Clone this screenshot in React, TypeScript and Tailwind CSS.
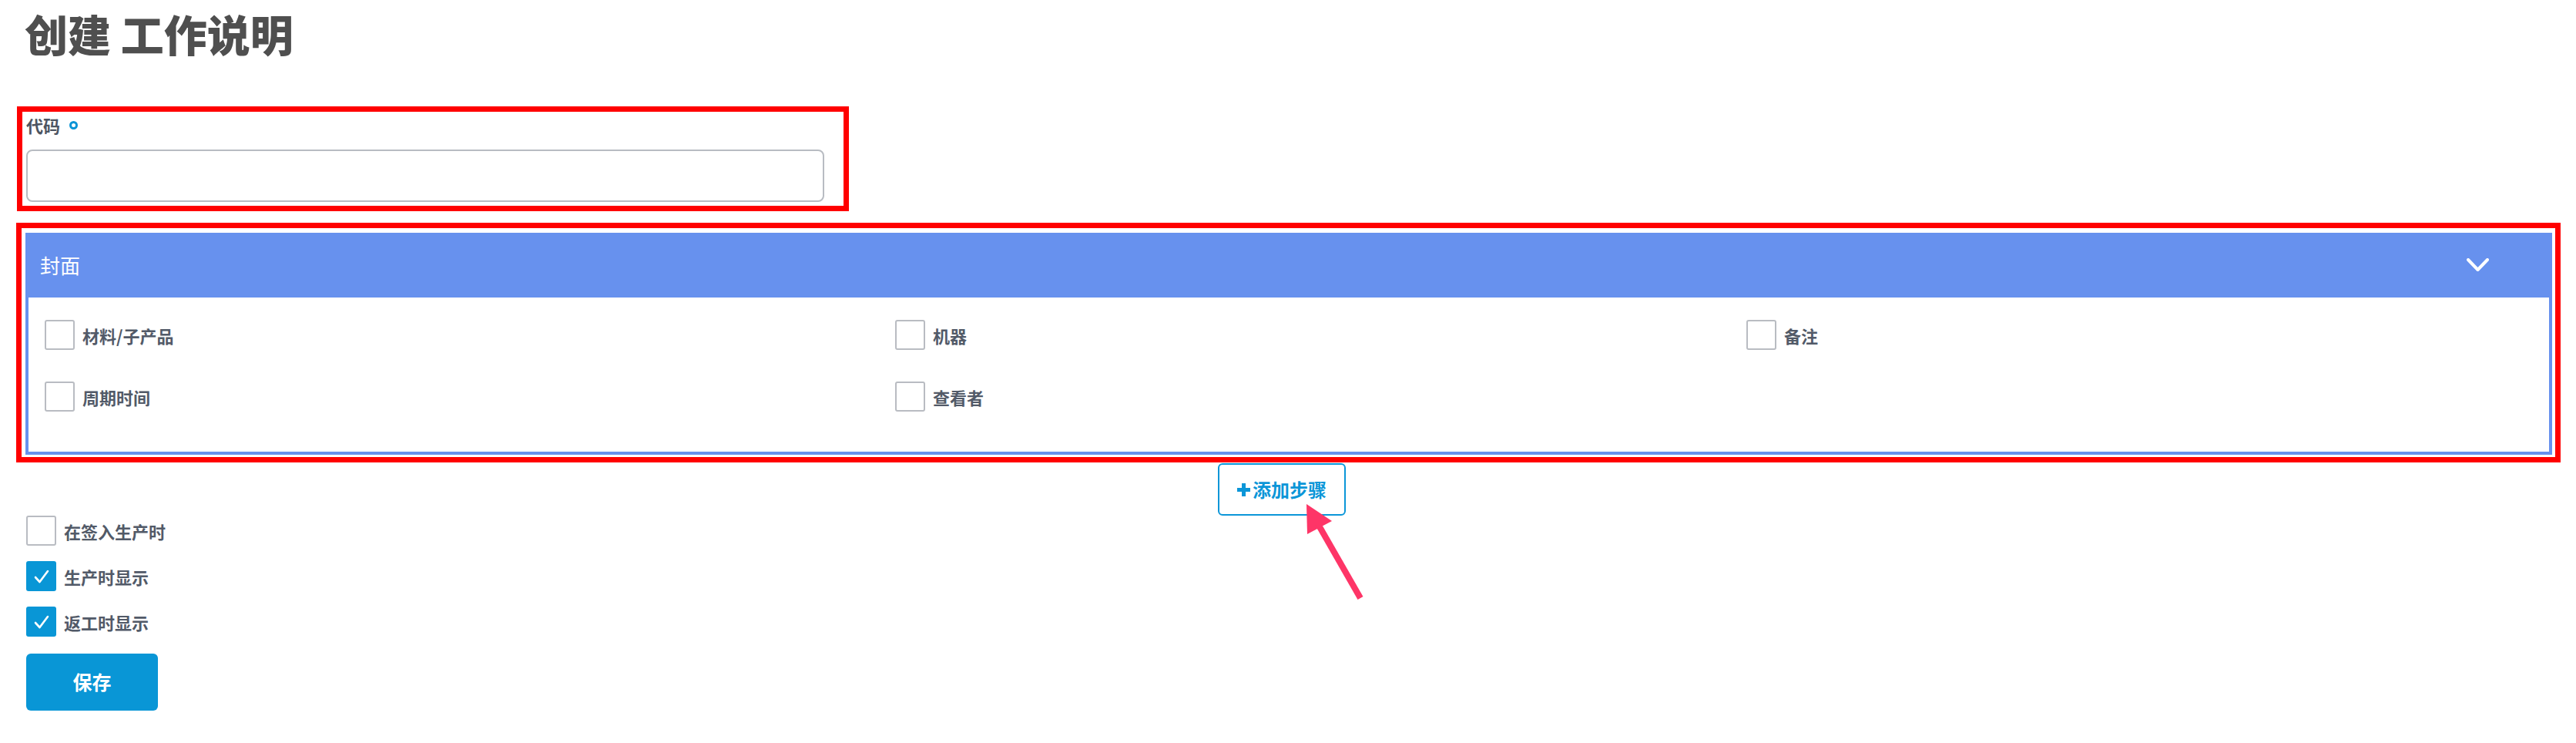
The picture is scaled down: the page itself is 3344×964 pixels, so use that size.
const fieldFont = { fontFamily: '"Noto Sans CJK SC", "Noto Sans", sans-serif' };

function Box({ checked = false }: { checked?: boolean }) {
  if (checked) {
    return (
      <span className="flex h-[39px] w-[39px] shrink-0 items-center justify-center rounded-[3px] bg-[#0996d6]">
        <svg width="22" height="22" viewBox="0 0 22 22" fill="none">
          <path d="M3 12 L8.5 18 L19 4" stroke="white" strokeWidth="2.6" strokeLinecap="round" strokeLinejoin="round" />
        </svg>
      </span>
    );
  }
  return <span className="h-[39px] w-[39px] shrink-0 rounded-[3px] border-2 border-[#b9bcc2] bg-white" />;
}

function Check({ label, checked }: { label: string; checked?: boolean }) {
  return (
    <label className="flex items-center gap-[10px]">
      <Box checked={checked} />
      <span className="text-[22px] font-bold leading-[28px] text-[#525a68]">{label}</span>
    </label>
  );
}

export default function App() {
  const coverFields = ["材料/子产品", "机器", "备注", "周期时间", "查看者"];

  return (
    <div className="relative min-h-[964px] w-full bg-white pl-[21px]" style={fieldFont}>
      {/* Heading */}
      <h1 className="pl-[11px] pt-[9px] text-[56px] font-black leading-[67px] text-[#4f4f4f]">创建 工作说明</h1>

      {/* Code field, boxed in red */}
      <div className="ml-px mt-[62px] w-[1080px] border-[7px] border-[#ff0000] px-[5px] pb-[5px] pt-[3px]">
        <div className="flex items-center gap-[12px]">
          <span className="text-[22px] font-bold leading-[28px] text-[#4d5562]">代码</span>
          <span className="h-[11px] w-[11px] rounded-full border-[3px] border-[#0a94d6]" />
        </div>
        <input className="mt-[18px] block h-[68px] w-[1036px] rounded-[8px] border-2 border-[#b8bcc2] bg-white outline-none" />
      </div>

      {/* Cover panel, boxed in red */}
      <div className="mt-[15px] w-[3303px] border-[7px] border-[#ff0000] pb-[3px] pl-[5px] pr-[4px] pt-[6px]">
        <div className="flex h-[84px] items-center justify-between bg-[#6791ee] pl-[19px] pr-[82px]">
          <span className="text-[26px] leading-[32px] text-white">封面</span>
          <svg width="29" height="18" viewBox="0 0 29 18" fill="none">
            <path d="M2 2 L14.5 15 L27 2" stroke="white" strokeWidth="4" strokeLinecap="round" strokeLinejoin="round" />
          </svg>
        </div>
        <div className="grid grid-cols-[1104px_1105px_1fr] gap-y-[41px] border-x-4 border-b-4 border-[#6791ee] pb-[52px] pl-[21px] pt-[29px]">
          {coverFields.map((f) => (
            <Check key={f} label={f} />
          ))}
        </div>
      </div>

      {/* Add step */}
      <div className="flex w-[3303px] justify-center pr-[18px]">
        <button className="mt-px flex h-[68px] w-[166px] items-center justify-center gap-[2px] rounded-[6px] border-2 border-[#0b96d8] text-[24px] font-bold leading-[30px] text-[#0b96d8]">
          <svg width="19" height="19" viewBox="0 0 19 19">
            <path d="M9.5 1 V18 M1 9.5 H18" stroke="#0b96d8" strokeWidth="5" />
          </svg>
          添加步骤
        </button>
      </div>

      {/* Options */}
      <div className="ml-[13px] mt-0 flex flex-col gap-[20px]">
        <Check label="在签入生产时" />
        <Check label="生产时显示" checked />
        <Check label="返工时显示" checked />
      </div>

      <button className="ml-[13px] mt-[22px] flex h-[74px] w-[171px] items-center justify-center rounded-[6px] bg-[#0996d6] text-[25px] font-bold text-white">
        保存
      </button>

      {/* Annotation arrow */}
      <svg className="pointer-events-none absolute left-[1680px] top-[640px]" width="110" height="150" viewBox="1680 640 110 150">
        <polygon points="1696,654 1697,693 1729,676" fill="#fe3567" />
        <path d="M1711,680 L1766,776" stroke="#fe3567" strokeWidth="8" />
      </svg>
    </div>
  );
}
